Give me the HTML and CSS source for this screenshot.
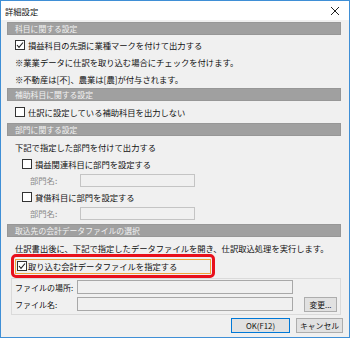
FILE: index.html
```html
<!DOCTYPE html>
<html lang="ja">
<head>
  <meta charset="UTF-8">
  <title>詳細設定</title>
  <link rel="stylesheet" href="styles.css">
</head>
<body>
  <div class="dialog">
    <div class="titlebar">
      <span class="title">詳細設定</span>
      <svg class="close" width="10" height="10" viewBox="0 0 10 10">
        <path d="M1 1 L9 9 M9 1 L1 9" stroke="#222" stroke-width="1" fill="none"/>
      </svg>
    </div>
    <div class="content">
      <div class="section-head">科目に関する設定</div>
      <div class="section first">
        <div class="row">
          <svg class="check" width="10" height="10" viewBox="0 0 10 10"><rect x="0.5" y="0.5" width="9" height="9" fill="#fff" stroke="#333"/><path d="M2 5 L4 7.3 L8 2.5" stroke="#222" stroke-width="1.1" fill="none"/></svg>
          <span>損益科目の先頭に業種マークを付けて出力する</span>
        </div>
        <div class="row">※業業データに仕訳を取り込む場合にチェックを付けます。</div>
        <div class="row">※不動産は[不]、農業は[農]が付与されます。</div>
      </div>

      <div class="section-head">補助科目に関する設定</div>
      <div class="section">
        <div class="row">
          <span class="box"></span>
          <span>仕訳に設定している補助科目を出力しない</span>
        </div>
      </div>

      <div class="section-head">部門に関する設定</div>
      <div class="section">
        <div class="row">下記で指定した部門を付けて出力する</div>
        <div class="row indent">
          <span class="box"></span>
          <span>損益関連科目に部門を設定する</span>
        </div>
        <div class="row field">
          <span class="field-label disabled">部門名:</span>
          <span class="input disabled-input"></span>
        </div>
        <div class="row indent">
          <span class="box"></span>
          <span>貸借科目に部門を設定する</span>
        </div>
        <div class="row field">
          <span class="field-label disabled">部門名:</span>
          <span class="input disabled-input"></span>
        </div>
      </div>

      <div class="section-head">取込先の会計データファイルの選択</div>
      <div class="section last">
        <div class="row">仕訳書出後に、下記で指定したデータファイルを開き、仕訳取込処理を実行します。</div>
        <div class="highlight">
          <div class="focus">
            <svg class="check" width="10" height="10" viewBox="0 0 10 10"><rect x="0.5" y="0.5" width="9" height="9" fill="#fff" stroke="#333"/><path d="M2 5 L4 7.3 L8 2.5" stroke="#222" stroke-width="1.1" fill="none"/></svg>
            <span>取り込む会計データファイルを指定する</span>
          </div>
        </div>
        <div class="group">
          <div class="group-row">
            <span class="file-label">ファイルの場所:</span>
            <span class="input file-input"></span>
          </div>
          <div class="group-row">
            <span class="file-label">ファイル名:</span>
            <span class="input file-input"></span>
            <span class="btn small">変更...</span>
          </div>
        </div>
      </div>

      <div class="footer">
        <span class="btn default">OK(F12)</span>
        <span class="btn cancel">キャンセル</span>
      </div>
    </div>
  </div>
</body>
</html>
```

FILE: styles.css
```css
body {
  margin: 0;
  font-family: "Noto Sans CJK JP", "Noto Sans", sans-serif;
  font-size: 8.3px;
  color: #111;
}
.dialog {
  width: 348px;
  height: 336px;
  border: 1px solid #3f8fd6;
  background-color: #f0f0f0;
  display: flex;
  flex-direction: column;
}
.titlebar {
  height: 19px;
  background-color: #fff;
  display: flex;
  align-items: center;
  justify-content: space-between;
  padding: 0 9px 0 4px;
}
.close {
  display: block;
}
.content {
  padding: 2px 8px 0 6px;
  display: flex;
  flex-direction: column;
}
.section-head {
  height: 11px;
  line-height: 11px;
  background-color: #a0a0a0;
  border: 1px solid #979797;
  color: #f2f2f2;
  padding-left: 7px;
  font-size: 7.8px;
  white-space: nowrap;
}
.section {
  padding: 2px 0 3px 8px;
  display: flex;
  flex-direction: column;
}
.section.first {
  padding-top: 1px;
  padding-bottom: 1px;
}
.section.last {
  padding-bottom: 0;
  padding-left: 4px;
}
.section.last > .row {
  padding-left: 4px;
}
.row {
  height: 17px;
  display: flex;
  align-items: center;
  gap: 3px;
  white-space: nowrap;
}
.indent {
  padding-left: 7px;
}
.check {
  display: block;
  flex: none;
}
.box {
  width: 8px;
  height: 8px;
  border: 1px solid #333;
  background-color: #fff;
  flex: none;
}
.field {
  height: 16px;
  padding-left: 15px;
}
.field-label {
  width: 47px;
}
.disabled {
  color: #8a8a8a;
}
.input {
  display: block;
  height: 11px;
  border: 1px solid #c4c4c4;
  background-color: #f0f0f0;
  flex: none;
}
.disabled-input {
  width: 113px;
}
.highlight {
  width: 198px;
  height: 18px;
  border: 3px solid #e8101c;
  border-radius: 5px;
  margin-top: -2px;
  display: flex;
  align-items: center;
}
.focus {
  flex: 1;
  height: 13px;
  margin: 0 1px;
  border: 1px solid #f0a33a;
  display: flex;
  align-items: center;
  gap: 1px;
  padding-left: 1px;
  white-space: nowrap;
}
.group {
  border: 1px solid #dadada;
  padding: 1px 3px 3px 3px;
  display: flex;
  flex-direction: column;
  gap: 3px;
}
.group-row {
  display: flex;
  align-items: center;
  height: 14px;
  white-space: nowrap;
}
.file-label {
  width: 62px;
  flex: none;
  font-size: 8px;
}
.file-input {
  width: 214px;
  height: 12px;
  border-color: #a8a8a8;
}
.btn {
  display: flex;
  align-items: center;
  justify-content: center;
  background-color: #e1e1e1;
  border: 1px solid #adadad;
  height: 13px;
  font-size: 7.8px;
  white-space: nowrap;
}
.small {
  width: 32px;
  margin-left: 11px;
}
.footer {
  display: flex;
  justify-content: flex-end;
  gap: 6px;
  margin-top: 3px;
  margin-right: -2px;
}
.default {
  width: 57px;
  border: 1px solid #0078d7;
}
.cancel {
  width: 45px;
}
```
